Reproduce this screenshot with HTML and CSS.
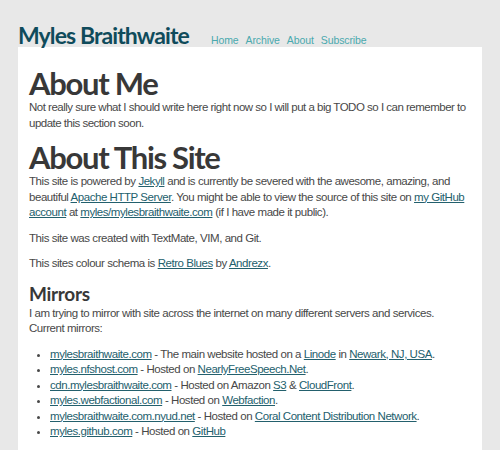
FILE: index.html
```html
<!DOCTYPE html>
<html>
<head>
<meta charset="utf-8">
<link rel="stylesheet" href="styles.css">
</head>
<body>
<header class="site-header">
  <a class="site-title" href="#">Myles Braithwaite</a>
  <nav class="site-nav">
    <a href="#">Home</a>
    <a href="#">Archive</a>
    <a href="#">About</a>
    <a href="#">Subscribe</a>
  </nav>
</header>
<main class="content">
  <h1 class="h-big">About Me</h1>
  <p class="intro">Not really sure what I should write here right now so I will put a big TODO so I can remember to update this section soon.</p>

  <h1 class="h-big">About This Site</h1>
  <p>This site is powered by <a href="#">Jekyll</a> and is currently be severed with the awesome, amazing, and beautiful <a href="#">Apache HTTP Server</a>. You might be able to view the source of this site on <a href="#">my GitHub account</a> at <a href="#">myles/mylesbraithwaite.com</a> (if I have made it public).</p>
  <p>This site was created with TextMate, VIM, and Git.</p>
  <p>This sites colour schema is <a href="#">Retro Blues</a> by <a href="#">Andrezx</a>.</p>

  <h2 class="h-mid">Mirrors</h2>
  <p>I am trying to mirror with site across the internet on many different servers and services. Current mirrors:</p>
  <ul class="mirrors">
    <li><a href="#">mylesbraithwaite.com</a> - The main website hosted on a <a href="#">Linode</a> in <a href="#">Newark, NJ, USA</a>.</li>
    <li><a href="#">myles.nfshost.com</a> - Hosted on <a href="#">NearlyFreeSpeech.Net</a>.</li>
    <li><a href="#">cdn.mylesbraithwaite.com</a> - Hosted on Amazon <a href="#">S3</a> &amp; <a href="#">CloudFront</a>.</li>
    <li><a href="#">myles.webfactional.com</a> - Hosted on <a href="#">Webfaction</a>.</li>
    <li><a href="#">mylesbraithwaite.com.nyud.net</a> - Hosted on <a href="#">Coral Content Distribution Network</a>.</li>
    <li><a href="#">myles.github.com</a> - Hosted on <a href="#">GitHub</a></li>
  </ul>
</main>
</body>
</html>
```

FILE: styles.css
```css
html, body {
  margin: 0;
  padding: 0;
  background: #e8e8e8;
}

body {
  font-family: "Liberation Sans", Arial, sans-serif;
  font-size: 11.5px;
  letter-spacing: -0.45px;
  line-height: 15.5px;
  color: #484848;
}

.site-header {
  display: flex;
  align-items: baseline;
  height: 47px;
  box-sizing: border-box;
  padding: 21px 0 0 18px;
}

.site-title {
  font-family: Lato, "Liberation Sans", sans-serif;
  font-weight: 700;
  font-size: 23px;
  letter-spacing: -0.9px;
  line-height: 28px;
  color: #0f4b5b;
  text-decoration: none;
}

.site-nav {
  display: flex;
  gap: 7px;
  margin-left: 22px;
}

.site-nav a {
  font-size: 10.5px;
  letter-spacing: -0.1px;
  color: #4aa9ae;
  text-decoration: none;
}

.content {
  margin: 0 18px;
  background: #fff;
  padding: 20px 11px 20px;
  min-height: 400px;
}

.h-big {
  font-family: Lato, "Liberation Sans", sans-serif;
  font-weight: 700;
  font-size: 31px;
  letter-spacing: -1.3px;
  line-height: 32px;
  color: #383838;
  margin: 0 0 1px;
}

.h-mid {
  font-family: Lato, "Liberation Sans", sans-serif;
  font-weight: 700;
  font-size: 19px;
  letter-spacing: -0.3px;
  line-height: 24px;
  color: #383838;
  margin: 3px 0 0;
}

p {
  margin: 0 0 10px;
}

.intro {
  letter-spacing: -0.5px;
}

a {
  color: #23606d;
}

.mirrors {
  margin: 0;
  padding-left: 21px;
}
```
